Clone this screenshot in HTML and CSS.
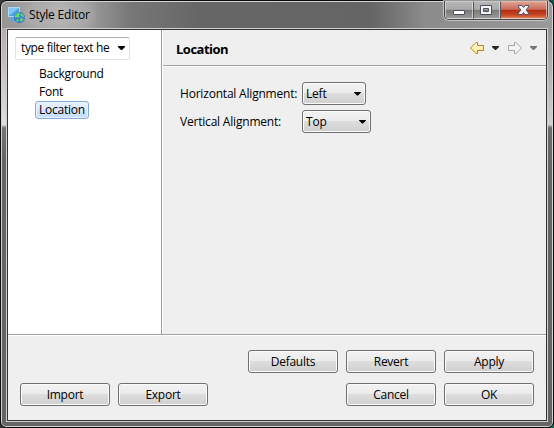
FILE: index.html
```html
<!DOCTYPE html>
<html lang="en">
<head>
<meta charset="utf-8">
<title>Style Editor</title>
<link rel="stylesheet" href="styles.css">
</head>
<body>
<div class="window">
  <header class="titlebar">
    <svg class="app-icon" width="17" height="17" viewBox="0 0 17 17">
      <rect x="0.5" y="0.5" width="11" height="9" fill="#4b9fe4" stroke="#a9d9f4"/>
      <path d="M1 1h10L2 8H1z" fill="#82c5f0"/>
      <path d="M4 10h4v2h2v2H2v-2h2z" fill="#5ba6dc"/>
      <circle cx="11.500" cy="10.500" r="5.200" fill="#3b7fd0" stroke="#2c69b5" stroke-width=".6"/>
      <path d="M7 8l3-2.500 2 .5-1 2 1 1-2 2-1-1-2 1zM13 6l2.500 2v2.500l-2-1.500-1-1zM9 12l2 1-1 2-2-1zM12.500 11l3 1-2 3-1.500-2z" fill="#58dc68"/>
    </svg>
    <h1 class="title">Style Editor</h1>
    <div class="controls">
      <div class="control minimize"><svg width="28" height="17"><rect x="9.5" y="9.5" width="11" height="4" rx=".5" fill="#fff" stroke="#4b4e61"/></svg></div>
      <div class="control maximize"><svg width="26" height="17"><path fill-rule="evenodd" d="M8.500 4.500h11v9h-11zM11.500 7.500v3h5v-3z" fill="#f3f3f3" stroke="#4b4e61"/></svg></div>
      <div class="control close"><svg width="46" height="17"><path d="M19.500 4.500h3.500l1.500 2 1.500-2h3.500v1.500L27 9l2.500 3v1.500h-3.500l-1.500-2-1.500 2h-3.500v-1.500L22 9l-2.500-3z" fill="#f4f4f4" stroke="#505365"/></svg></div>
    </div>
  </header>
  <div class="client">
    <div class="main">
      <aside class="sidebar">
        <div class="filter"><span>type filter text he</span><i class="arrow"></i></div>
        <ul class="tree">
          <li><span>Background</span></li>
          <li><span>Font</span></li>
          <li class="selected"><span>Location</span></li>
        </ul>
      </aside>
      <section class="page">
        <div class="page-header">
          <h2>Location</h2>
          <svg class="nav" width="72" height="16" viewBox="0 0 72 16">
            <defs><linearGradient id="gold" x2="0" y2="1"><stop stop-color="#fffbe0"/><stop offset="1" stop-color="#ffe58e"/></linearGradient></defs>
            <path d="M1.500 8L7 2.500h1.500v3h6v5h-6v3H7z" fill="url(#gold)" stroke="#bd7c14"/>
            <path d="M23 6h7v1l-3 3h-1l-3-3z" fill="#252525"/>
            <path d="M52.500 8L47 2.500h-1.500v3h-6v5h6v3H47z" fill="#f4f4f4" stroke="#a5a5a5"/>
            <path d="M61 6h7v1l-3 3h-1l-3-3z" fill="#757575"/>
          </svg>
        </div>
        <div class="form">
          <div class="row"><label>Horizontal Alignment:</label><div class="combo"><span>Left</span><i class="arrow"></i></div></div>
          <div class="row"><label>Vertical Alignment:</label><div class="combo combo-top"><span>Top</span><i class="arrow"></i></div></div>
        </div>
      </section>
    </div>
    <footer class="footer">
      <div class="buttons"><button>Defaults</button><button>Revert</button><button>Apply</button></div>
      <div class="buttons"><button>Import</button><button class="push">Export</button><button>Cancel</button><button>OK</button></div>
    </footer>
  </div>
</div>
</body>
</html>
```
FILE: styles.css
```css
* { box-sizing: border-box; }
body {
  margin: 0;
  background: linear-gradient(100deg, #3b3b3b, #111 50%, #087455);
  color: #000;
  font: 12px/16px "Open Sans", "Noto Sans", sans-serif;
  letter-spacing: -.2px;
  overflow: hidden;
}
h1, h2, ul { margin: 0; padding: 0; }
span, label, h1, h2 { white-space: nowrap; }
.window {
  width: 554px;
  height: 428px;
  padding: 0 5px 4px;
  border: 1px solid #0a0a0a;
  border-radius: 7px 7px 6px 6px;
  box-shadow: inset 0 0 0 1px #d4d4d4;
  background:
    linear-gradient(#b2abab, #e2dddd 97px, #aaa 98px, #787474 100px, #666363 133px, #646464) 0 27px / 6px 393px no-repeat,
    linear-gradient(#999, #a4a4a4 20px, #cfcfcf 97px, #999 98px, #6b6b6b 100px, #666 140px, #646464) 546px 27px / 6px 393px no-repeat,
    linear-gradient(90deg, #979494 0, #aaa 60px, #999 90px, #777 130px, #666 200px, #656565 370px, #8c8c8c 425px, #999 546px) 0 0 / 100% 27px no-repeat,
    #646464;
}
.titlebar { display: flex; height: 27px; padding-left: 2px; }
.app-icon { margin-top: 6px; }
.title {
  margin: 6px 0 0 4px;
  font-size: 12px;
  line-height: 16px;
  font-weight: 400;
  height: 16px;
  border-radius: 8px;
  background: rgba(255,255,255,.12);
  box-shadow: 0 0 8px 5px rgba(255,255,255,.14);
}
.controls {
  display: flex;
  width: 104px;
  height: 19px;
  margin: 0 0 0 auto;
  border: 1px solid #454545;
  border-top: 0;
  border-radius: 0 0 5px 5px;
  box-shadow: 0 0 0 1px rgba(225,225,225,.65);
  overflow: hidden;
}
.control {
  height: 18px;
  border: 1px solid rgba(245,245,245,.55);
  background: linear-gradient(#b5b5b5, #aaa 46%, #797979 50%, #999);
}
.control svg { display: block; margin: -1px -2px 0; }
.minimize { width: 28px; }
.maximize, .close { border-left: 1px solid #555; }
.maximize { width: 27px; }
.close { width: 47px; background: linear-gradient(#dda092, #cc6b58 46%, #b32c15 50%, #c54524 80%, #de7a52); }
.client {
  display: flex;
  flex-direction: column;
  width: 542px;
  height: 394px;
  border: 1px solid #d0d0d0;
  background: #efefef;
  outline: 1px solid #333;
  outline-offset: -2px;
  padding: 1px;
}
.main { display: flex; height: 305px; border-bottom: 1px solid #a0a0a0; }
.sidebar { width: 154px; padding: 7px 0 0 7px; background: #fff; border-right: 1px solid #a0a0a0; }
.filter {
  display: flex;
  align-items: center;
  justify-content: space-between;
  width: 115px;
  height: 23px;
  padding: 0 4px 1px 5px;
  border: 1px solid #dfe1e7;
  border-top-color: #abadb3;
  border-radius: 2px;
  letter-spacing: -.37px;
}
.arrow { width: 7px; height: 4px; background: #000; clip-path: polygon(0 0, 100% 0, 100% 25%, 57% 100%, 43% 100%, 0 25%); }
.tree { padding: 5px 0 0 20px; list-style: none; letter-spacing: -.25px; }
.tree li { width: 54px; height: 18px; padding-left: 4px; line-height: 18px; }
.tree .selected { padding-left: 3px; border: 1px solid #84acdd; border-radius: 3px; line-height: 16px; background: linear-gradient(#eaf3ff, #c4dcfc); box-shadow: inset 0 0 0 1px #e6f1fd; }
.page { flex: 1; border-left: 1px solid #fff; }
.page-header { display: flex; justify-content: space-between; height: 37px; border-bottom: 1px solid #a0a0a0; box-shadow: 0 1px #fff; margin-top: -1px; padding: 1px 5px 0 13px; }
h2 { margin-top: 11px; font-size: 13px; line-height: 16px; font-weight: 700; letter-spacing: -.5px; }
.nav { margin: 10px 0 0; }
.form { padding: 16px 0 0 17px; display: grid; gap: 5px; }
.row { display: flex; height: 23px; align-items: center; }
label { width: 122px; }
.combo, button {
  border: 1px solid #707070;
  border-radius: 3px;
  background: linear-gradient(#f2f2f2, #ebebeb 49%, #ddd 50%, #cfcfcf);
  box-shadow: inset 0 0 0 1px #fbfbfb;
}
.combo { display: flex; align-items: center; justify-content: space-between; width: 64px; height: 23px; padding: 0 4px 0 3px; }
.combo-top { width: 69px; }
.footer { flex: 1; border-top: 1px solid #fff; padding: 14px 12px 0; display: flex; flex-direction: column; gap: 10px; }
.buttons { display: flex; justify-content: flex-end; gap: 8px; }
button { width: 90px; height: 23px; padding: 0; font: inherit; letter-spacing: -.25px; color: #000; }
.push { margin-right: auto; }
```
